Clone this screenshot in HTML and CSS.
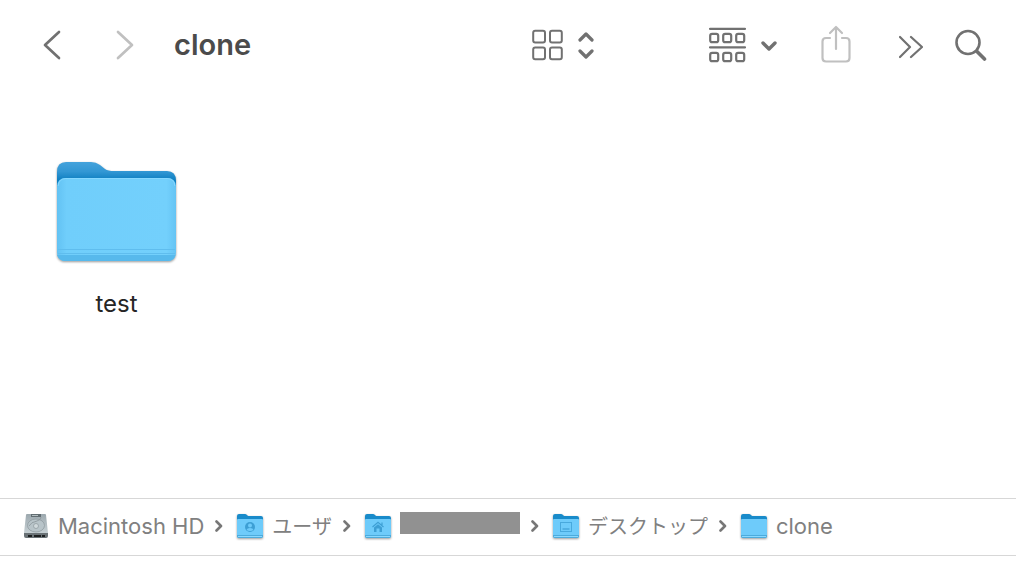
FILE: index.html
```
<!DOCTYPE html>
<html lang="ja">
<head>
    <meta charset="UTF-8">
    <meta name="viewport" content="width=device-width, initial-scale=1">
    <title>clone</title>
    <link rel="stylesheet" href="styles.css">
</head>
<body>
    <!-- Shared drawings -->
    <svg class="defs" width="0" height="0" aria-hidden="true">
        <defs>
            <linearGradient id="folderBack" x1="0" y1="0" x2="0" y2="1">
                <stop offset="0" stop-color="#45a3dc"></stop>
                <stop offset="0.16" stop-color="#3297d4"></stop>
                <stop offset="0.3" stop-color="#0e7fc1"></stop>
            </linearGradient>
            <linearGradient id="folderFront" x1="0" y1="0" x2="1" y2="0">
                <stop offset="0" stop-color="#62c2f3"></stop>
                <stop offset="0.08" stop-color="#70cefb"></stop>
                <stop offset="0.92" stop-color="#73d0fc"></stop>
                <stop offset="1" stop-color="#65c4f4"></stop>
            </linearGradient>
            <linearGradient id="metal" x1="0" y1="0" x2="0" y2="1">
                <stop offset="0" stop-color="#9ca8ae"></stop>
                <stop offset="1" stop-color="#c6d0d4"></stop>
            </linearGradient>
            <symbol id="folder" viewBox="0 0 119 102">
                <path fill="url(#folderBack)" d="M0 10Q0 0 9 0H34Q39 0 43 3L48 7Q51 9 57 9H110Q119 9 119 19V60H0Z"></path>
                <path fill="url(#folderFront)" d="M0 25Q0 16 9 16H110Q119 16 119 25V90Q119 99 110 99H9Q0 99 0 90Z"></path>
                <path fill="#57b9ec" d="M0 93H118.500Q117 99 110 99H9Q2 99 0 93Z"></path>
                <path fill="none" stroke="#5fbdee" d="M1 87.500H118M1 91.500H118"></path>
                <path fill="none" stroke="#86d8ff" d="M1 24Q2 16.500 9 16.500H110Q117 16.500 118 24"></path>
            </symbol>
            <symbol id="smallFolder" viewBox="0 0 26 25">
                <path fill="#198bca" d="M0 2Q0 0 2 0H8Q9 0 10 1L11 2H24Q26 2 26 4V12H0Z"></path>
                <path fill="#6ecbfa" d="M0 6Q0 5 1 5H25Q26 5 26 6V22Q26 24 24 24H2Q0 24 0 22Z"></path>
                <path fill="#4cabdc" d="M0 21H26V22Q26 24 24 24H2Q0 24 0 22Z"></path>
                <path fill="none" stroke="#8ad9ff" d="M1 22.500H25"></path>
            </symbol>
            <symbol id="separator" viewBox="0 0 8 12">
                <path fill="none" stroke="#777" stroke-width="2.600" stroke-linecap="round" stroke-linejoin="round" d="M1.500 1.500L6 6L1.500 10.500"></path>
            </symbol>
        </defs>
    </svg>

    <header class="toolbar">
        <nav class="history">
            <button class="tool" aria-label="Back">
                <svg width="18" height="30" viewBox="0 0 18 30"><path d="M16 2L2 15L16 28" stroke-width="2.700"></path></svg>
            </button>
            <button class="tool disabled" aria-label="Forward" disabled>
                <svg width="18" height="30" viewBox="0 0 18 30"><path d="M2 2L16 15L2 28" stroke-width="2.700"></path></svg>
            </button>
            <h1>clone</h1>
        </nav>
        <button class="tool view" aria-label="Icon view">
            <svg width="31" height="32" viewBox="0 0 31 32" stroke-width="2">
                <rect x="1.200" y="1.800" width="11.800" height="11.800" rx="2"></rect>
                <rect x="18" y="1.800" width="11.800" height="11.800" rx="2"></rect>
                <rect x="1.200" y="18.500" width="11.800" height="11.800" rx="2"></rect>
                <rect x="18" y="18.500" width="11.800" height="11.800" rx="2"></rect>
            </svg>
            <svg width="18" height="28" viewBox="0 0 18 28"><path d="M3 9L9 3L15 9M3 20L9 26L15 20" stroke-width="3.200"></path></svg>
        </button>
        <button class="tool group" aria-label="Group items">
            <svg width="37" height="36" viewBox="0 0 37 36" stroke-width="2.200">
                <path d="M1 1.800H36M1 20.300H36"></path>
                <rect x="1.200" y="6.800" width="8" height="8.400" rx="2"></rect>
                <rect x="14.200" y="6.800" width="8" height="8.400" rx="2"></rect>
                <rect x="27.200" y="6.800" width="8" height="8.400" rx="2"></rect>
                <rect x="1.200" y="25.800" width="8" height="8.400" rx="2"></rect>
                <rect x="14.200" y="25.800" width="8" height="8.400" rx="2"></rect>
                <rect x="27.200" y="25.800" width="8" height="8.400" rx="2"></rect>
            </svg>
            <svg width="18" height="12" viewBox="0 0 18 12"><path d="M3 4L9 10L15 4" stroke-width="3.400"></path></svg>
        </button>
        <button class="tool disabled share" aria-label="Share" disabled>
            <svg width="30" height="40" viewBox="0 0 30 40" stroke-width="2.200">
                <path d="M9 13H5Q1.500 13 1.500 16.500V33Q1.500 36.500 5 36.500H25Q28.500 36.500 28.500 33V16.500Q28.500 13 25 13H21"></path>
                <path d="M15 24V2M9 8L15 2L21 8"></path>
            </svg>
        </button>
        <button class="tool more" aria-label="More">
            <svg width="24" height="28" viewBox="0 0 24 28"><path d="M1 6L11 16L1 26M12 6L23 16L12 26" stroke-width="2.200"></path></svg>
        </button>
        <button class="tool" aria-label="Search">
            <svg width="32" height="32" viewBox="0 0 32 32">
                <circle cx="13" cy="13.500" r="11.500" stroke-width="2.600"></circle>
                <path d="M22 22.500L29.500 30" stroke-width="3.600"></path>
            </svg>
        </button>
    </header>

    <main class="files">
        <a class="file" href="#test">
            <svg class="folder" width="119" height="102"><use href="#folder"></use></svg>
            <span>test</span>
        </a>
    </main>

    <footer class="pathbar">
        <a class="crumb" href="#hd">
            <svg width="26" height="28" viewBox="0 0 26 28">
                <path fill="url(#metal)" d="M3 3Q3 2 4 2H22Q23 2 23 3L25 21H1Z"></path>
                <path fill="#6a7276" d="M1 21H25V24Q25 26 23 26H3Q1 26 1 24Z"></path>
                <path fill="#1d2021" d="M5 23H9V25H5ZM11 23H18V25H11ZM19 23H22V25H19Z"></path>
                <path fill="#626d72" d="M8 2H18V5H8Z"></path>
                <path fill="#b4bec1" d="M9 3H15V4H9Z"></path>
                <ellipse cx="13" cy="13.500" rx="8.500" ry="6.500" fill="#b8c4c9" stroke="#929da2" stroke-width="0.800"></ellipse>
                <circle cx="13" cy="14" r="2.500" fill="#d0d9dc" stroke="#929da2" stroke-width="0.800"></circle>
                <path d="M6 14Q8 10 14 9Q18 8 18 5" fill="none" stroke="#8b969b" stroke-width="0.800"></path>
            </svg>
            <span>Macintosh HD</span>
        </a>
        <svg class="separator" width="8" height="12"><use href="#separator"></use></svg>
        <a class="crumb" href="#users">
            <svg class="folder" width="26" height="25" viewBox="0 0 26 25">
                <use href="#smallFolder"></use>
                <circle cx="13" cy="13" r="5" fill="#3d9fd4"></circle>
                <circle cx="13" cy="11.500" r="2" fill="#6ecbfa"></circle>
                <path fill="#6ecbfa" d="M9.500 16Q10 14 13 14Q16 14 16.500 16Q13 18 9.500 16Z"></path>
            </svg>
            <span class="kana">ユーザ</span>
        </a>
        <svg class="separator" width="8" height="12"><use href="#separator"></use></svg>
        <a class="crumb" href="#home" aria-label="Home">
            <svg class="folder" width="26" height="25" viewBox="0 0 26 25">
                <use href="#smallFolder"></use>
                <path fill="none" stroke="#3d9fd4" stroke-width="1.200" d="M7.500 13L13 8.200L18.500 13M17 8.500V11"></path>
                <path fill="#3d9fd4" d="M9 13.500L13 10.200L17 13.500V18H14.500V14.500H11.500V18H9Z"></path>
            </svg>
            <span class="hidden-name"></span>
        </a>
        <svg class="separator" width="8" height="12"><use href="#separator"></use></svg>
        <a class="crumb" href="#desktop">
            <svg class="folder" width="26" height="25" viewBox="0 0 26 25">
                <use href="#smallFolder"></use>
                <rect x="7.500" y="8.500" width="11" height="9" fill="none" stroke="#48a9dd"></rect>
                <path stroke="#48a9dd" stroke-width="1.500" d="M9.500 15H16.500"></path>
            </svg>
            <span class="kana">デスクトップ</span>
        </a>
        <svg class="separator" width="8" height="12"><use href="#separator"></use></svg>
        <a class="crumb" href="#clone">
            <svg class="folder" width="26" height="25"><use href="#smallFolder"></use></svg>
            <span>clone</span>
        </a>
    </footer>
</body>
</html>
```
FILE: styles.css
```
* {
    box-sizing: border-box;
}

body {
    margin: 0;
    min-height: 100vh;
    display: flex;
    flex-direction: column;
    background: #fff;
    font-family: Inter, "Noto Sans CJK JP", sans-serif;
}

svg {
    display: block;
    flex-shrink: 0;
}

a {
    color: inherit;
    text-decoration: none;
}

.defs {
    position: absolute;
}

/* Toolbar */
.toolbar {
    display: flex;
    align-items: center;
    height: 90px;
    padding: 0 29px 0 43px;
}

.history {
    display: flex;
    align-items: center;
    flex: 1;
    gap: 55px;
}

.history h1 {
    margin: 0 0 0 -15px;
    font-size: 29px;
    line-height: 36px;
    font-weight: 600;
    color: #4b4b4b;
}

.tool {
    display: flex;
    align-items: center;
    padding: 0;
    border: 0;
    background: none;
    color: #717171;
}

.tool svg {
    fill: none;
    stroke: currentColor;
    stroke-linecap: round;
    stroke-linejoin: round;
}

.tool.disabled {
    color: #c0c0c0;
}

.view {
    gap: 14px;
    margin-right: 114px;
}

.group {
    gap: 14px;
    margin-right: 43px;
}

.share {
    margin-right: 48px;
}

.more {
    margin-right: 32px;
}

/* Files */
.files {
    flex: 1;
    padding: 72px 57px;
}

.file {
    display: inline-flex;
    flex-direction: column;
    align-items: center;
    gap: 24px;
    font-size: 24px;
    line-height: 32px;
    color: #252525;
}

.folder {
    filter: drop-shadow(0 1px 1px rgba(0, 0, 0, 0.4));
}

/* Path bar */
.pathbar {
    display: flex;
    align-items: center;
    gap: 11px;
    height: 58px;
    margin-bottom: 10px;
    padding: 0 23px 2px;
    border-top: 1px solid #d7d7d7;
    border-bottom: 1px solid #d7d7d7;
    font-size: 22px;
    line-height: 28px;
    color: #808080;
    white-space: nowrap;
}

.crumb {
    display: flex;
    align-items: center;
    gap: 9px;
}

.separator {
    margin-right: 3px;
}

.kana {
    font-family: "Noto Sans CJK JP", sans-serif;
    font-size: 20px;
}

.hidden-name {
    width: 120px;
    height: 22px;
    margin-bottom: 6px;
    background: #919191;
}
```
